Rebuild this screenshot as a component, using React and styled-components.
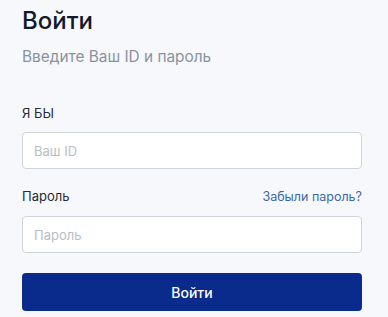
import React from "react";
import styled, { createGlobalStyle } from "styled-components";

const Global = createGlobalStyle`
  html, body { margin: 0; padding: 0; background: #f6f8fc; }
  body { font-family: Inter, "Noto Sans", sans-serif; }
  * { box-sizing: border-box; }
`;

const Page = styled.div`
  width: 388px;
  height: 317px;
  padding: 6px 26px 0 22px;
  display: flex;
  flex-direction: column;
`;

const Title = styled.h1`
  margin: 0;
  font-size: 24px;
  font-weight: 500;
  line-height: 30px;
  color: #111a2c;
`;

const Subtitle = styled.p`
  margin: 11px 0 0;
  font-size: 15.4px;
  line-height: 20px;
  color: #8a939d;
`;

const Form = styled.form`
  margin-top: 37px;
  display: flex;
  flex-direction: column;
`;

const Field = styled.div`
  display: flex;
  flex-direction: column;
  margin-bottom: ${(p) => p.$gap || 0}px;
`;

const LabelRow = styled.div`
  display: flex;
  justify-content: space-between;
  align-items: baseline;
  margin-bottom: 10px;
`;

const Label = styled.label`
  font-size: 13px;
  line-height: 18px;
  color: #262c33;
`;

const Link = styled.a`
  font-size: 12.5px;
  line-height: 18px;
  color: #3d66a8;
  text-decoration: none;
`;

const Input = styled.input`
  width: 100%;
  height: 37px;
  border: 1px solid #cfd4db;
  border-radius: 4px;
  background: #fff;
  padding: 0 11px;
  font-family: inherit;
  font-size: 13px;
  color: #262c33;
  outline: none;
  &::placeholder { color: #b7bdc5; }
`;

const Button = styled.button`
  width: 100%;
  height: 38px;
  margin-top: 20px;
  border: none;
  border-radius: 4px;
  background: #0a2a8c;
  color: #fff;
  font-family: inherit;
  font-size: 14px;
  font-weight: 500;
`;

export default function App() {
  return (
    <>
      <Global />
      <Page>
        <Title>Войти</Title>
        <Subtitle>Введите Ваш ID и пароль</Subtitle>
        <Form onSubmit={(e) => e.preventDefault()}>
          <Field $gap={18}>
            <LabelRow>
              <Label>Я БЫ</Label>
            </LabelRow>
            <Input placeholder="Ваш ID" />
          </Field>
          <Field>
            <LabelRow>
              <Label>Пароль</Label>
              <Link href="#">Забыли пароль?</Link>
            </LabelRow>
            <Input type="password" placeholder="Пароль" />
          </Field>
          <Button type="submit">Войти</Button>
        </Form>
      </Page>
    </>
  );
}
